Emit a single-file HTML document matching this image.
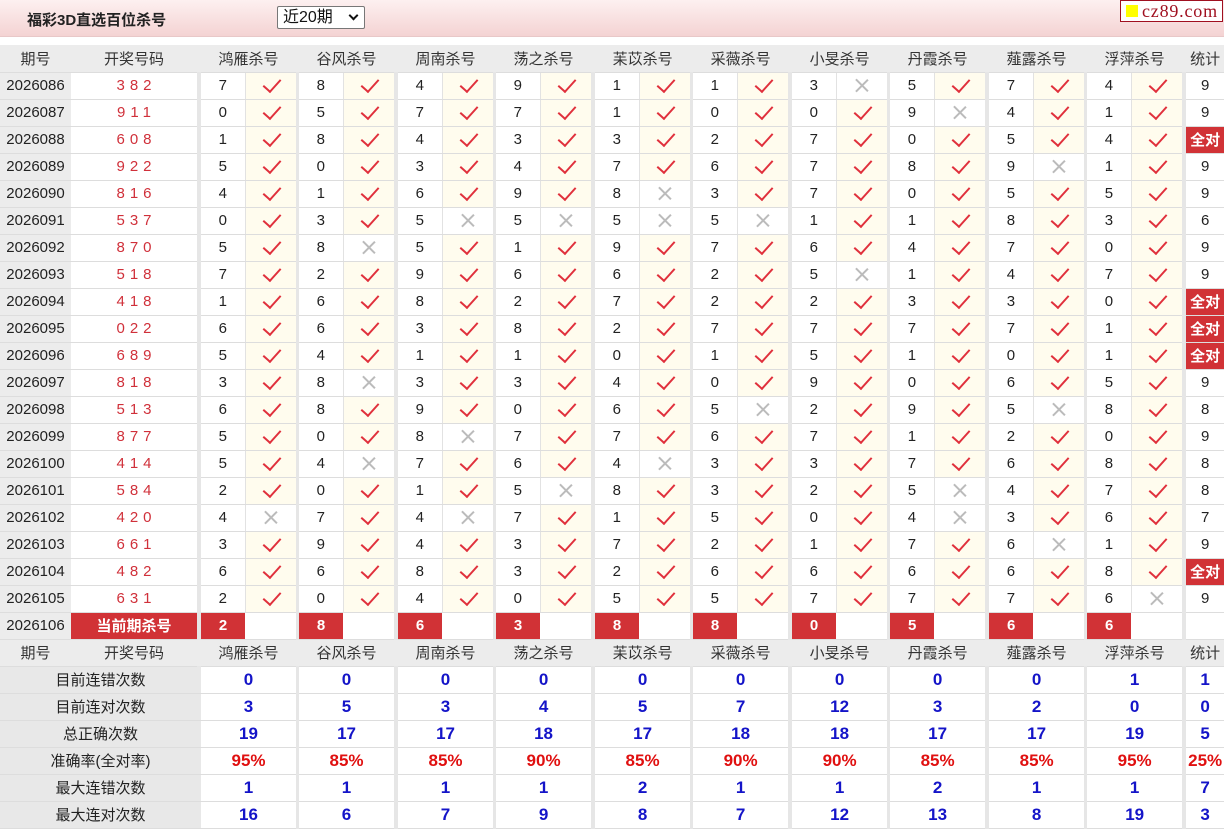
<!DOCTYPE html>
<html><head><meta charset="utf-8">
<style>
*{margin:0;padding:0;box-sizing:border-box}
body{width:1224px;height:828px;background:#fff;font-family:"Liberation Sans","Noto Sans CJK SC",sans-serif;overflow:hidden;position:relative}
.top{position:absolute;left:0;top:0;width:1224px;height:37px;background:linear-gradient(#fdf0f0,#f4d3d3);border-bottom:1px solid #e8c8c8}
.title{position:absolute;left:27px;top:9px;font-size:15px;font-weight:bold;color:#222}
.sel{position:absolute;left:277px;top:6px;width:88px;height:23px;border:1px solid #777;background:#fff;border-radius:2px;font-size:16px;padding-left:5px;line-height:21px;color:#111}
.sel i{position:absolute;right:7px;top:5px;width:7px;height:7px;border-right:2px solid #111;border-bottom:2px solid #111;transform:rotate(45deg)}
.logo{position:absolute;left:1120px;top:0;width:103px;height:22px;border:1px solid #a01020;background:#fff;font-family:"Liberation Serif",serif;font-size:18px;color:#a01020;line-height:20px;padding-left:21px;letter-spacing:.8px}
.logo b{position:absolute;left:5px;top:4px;width:12px;height:12px;background:#ffff00}
table{position:absolute;left:0;top:45px;border-collapse:collapse;table-layout:fixed;width:1224px}
td{height:27px;border-bottom:1px solid #ddd;text-align:center;font-size:15px;color:#222;padding:0;white-space:nowrap;overflow:hidden}
tr.h td{background:#ececec;color:#333}
td.q{background:#ececec}
td.k{color:#d0303a;letter-spacing:5px;padding-left:5px}
td.s{background:#e6e6e6;border-bottom-color:#e6e6e6}
td.n{border-right:1px solid #e2e2e2}
td.y{background:#fffcee;position:relative}
td.y::after{content:"";position:absolute;left:21px;top:2px;width:8px;height:15px;border-right:2.5px solid #e0303c;border-bottom:2.5px solid #e0303c;transform:rotate(42deg)}
td.x{position:relative}
td.x::before,td.x::after{content:"";position:absolute;left:24px;top:4px;width:1.5px;height:17px;background:#bbb;transform:rotate(45deg)}
td.x::after{transform:rotate(-45deg)}
td.r{background:#d13236;color:#fff;font-weight:bold}
td.L{background:#e8e8e8;color:#222}
td.v{color:#1414c8;font-weight:bold;font-size:17px}
td.p{color:#e01010;font-weight:bold;font-size:17px}
</style></head><body>
<div class="top"><div class="title">福彩3D直选百位杀号</div><div class="sel">近20期<i></i></div><div class="logo"><b></b>cz89.com</div></div>
<table>
<colgroup><col style="width:71px"><col style="width:126px"><col style="width:4px">
<col style="width:44px"><col style="width:51px"><col style="width:3px">
<col style="width:44px"><col style="width:51px"><col style="width:4px">
<col style="width:44px"><col style="width:51px"><col style="width:3px">
<col style="width:44px"><col style="width:51px"><col style="width:4px">
<col style="width:44px"><col style="width:51px"><col style="width:3px">
<col style="width:44px"><col style="width:51px"><col style="width:4px">
<col style="width:44px"><col style="width:51px"><col style="width:3px">
<col style="width:44px"><col style="width:51px"><col style="width:4px">
<col style="width:44px"><col style="width:51px"><col style="width:3px">
<col style="width:44px"><col style="width:51px"><col style="width:4px">
<col style="width:38px"></colgroup>
<tr class="h"><td>期号</td><td>开奖号码</td><td class="s"></td><td colspan="2">鸿雁杀号</td><td class="s"></td><td colspan="2">谷风杀号</td><td class="s"></td><td colspan="2">周南杀号</td><td class="s"></td><td colspan="2">荡之杀号</td><td class="s"></td><td colspan="2">苿苡杀号</td><td class="s"></td><td colspan="2">采薇杀号</td><td class="s"></td><td colspan="2">小旻杀号</td><td class="s"></td><td colspan="2">丹霞杀号</td><td class="s"></td><td colspan="2">薤露杀号</td><td class="s"></td><td colspan="2">浮萍杀号</td><td class="s"></td><td>统计</td></tr>
<tr><td class="q">2026086</td><td class="k">382</td><td class="s"></td><td class="n">7</td><td class="y"></td><td class="s"></td><td class="n">8</td><td class="y"></td><td class="s"></td><td class="n">4</td><td class="y"></td><td class="s"></td><td class="n">9</td><td class="y"></td><td class="s"></td><td class="n">1</td><td class="y"></td><td class="s"></td><td class="n">1</td><td class="y"></td><td class="s"></td><td class="n">3</td><td class="x"></td><td class="s"></td><td class="n">5</td><td class="y"></td><td class="s"></td><td class="n">7</td><td class="y"></td><td class="s"></td><td class="n">4</td><td class="y"></td><td class="s"></td><td>9</td></tr>
<tr><td class="q">2026087</td><td class="k">911</td><td class="s"></td><td class="n">0</td><td class="y"></td><td class="s"></td><td class="n">5</td><td class="y"></td><td class="s"></td><td class="n">7</td><td class="y"></td><td class="s"></td><td class="n">7</td><td class="y"></td><td class="s"></td><td class="n">1</td><td class="y"></td><td class="s"></td><td class="n">0</td><td class="y"></td><td class="s"></td><td class="n">0</td><td class="y"></td><td class="s"></td><td class="n">9</td><td class="x"></td><td class="s"></td><td class="n">4</td><td class="y"></td><td class="s"></td><td class="n">1</td><td class="y"></td><td class="s"></td><td>9</td></tr>
<tr><td class="q">2026088</td><td class="k">608</td><td class="s"></td><td class="n">1</td><td class="y"></td><td class="s"></td><td class="n">8</td><td class="y"></td><td class="s"></td><td class="n">4</td><td class="y"></td><td class="s"></td><td class="n">3</td><td class="y"></td><td class="s"></td><td class="n">3</td><td class="y"></td><td class="s"></td><td class="n">2</td><td class="y"></td><td class="s"></td><td class="n">7</td><td class="y"></td><td class="s"></td><td class="n">0</td><td class="y"></td><td class="s"></td><td class="n">5</td><td class="y"></td><td class="s"></td><td class="n">4</td><td class="y"></td><td class="s"></td><td class="r">全对</td></tr>
<tr><td class="q">2026089</td><td class="k">922</td><td class="s"></td><td class="n">5</td><td class="y"></td><td class="s"></td><td class="n">0</td><td class="y"></td><td class="s"></td><td class="n">3</td><td class="y"></td><td class="s"></td><td class="n">4</td><td class="y"></td><td class="s"></td><td class="n">7</td><td class="y"></td><td class="s"></td><td class="n">6</td><td class="y"></td><td class="s"></td><td class="n">7</td><td class="y"></td><td class="s"></td><td class="n">8</td><td class="y"></td><td class="s"></td><td class="n">9</td><td class="x"></td><td class="s"></td><td class="n">1</td><td class="y"></td><td class="s"></td><td>9</td></tr>
<tr><td class="q">2026090</td><td class="k">816</td><td class="s"></td><td class="n">4</td><td class="y"></td><td class="s"></td><td class="n">1</td><td class="y"></td><td class="s"></td><td class="n">6</td><td class="y"></td><td class="s"></td><td class="n">9</td><td class="y"></td><td class="s"></td><td class="n">8</td><td class="x"></td><td class="s"></td><td class="n">3</td><td class="y"></td><td class="s"></td><td class="n">7</td><td class="y"></td><td class="s"></td><td class="n">0</td><td class="y"></td><td class="s"></td><td class="n">5</td><td class="y"></td><td class="s"></td><td class="n">5</td><td class="y"></td><td class="s"></td><td>9</td></tr>
<tr><td class="q">2026091</td><td class="k">537</td><td class="s"></td><td class="n">0</td><td class="y"></td><td class="s"></td><td class="n">3</td><td class="y"></td><td class="s"></td><td class="n">5</td><td class="x"></td><td class="s"></td><td class="n">5</td><td class="x"></td><td class="s"></td><td class="n">5</td><td class="x"></td><td class="s"></td><td class="n">5</td><td class="x"></td><td class="s"></td><td class="n">1</td><td class="y"></td><td class="s"></td><td class="n">1</td><td class="y"></td><td class="s"></td><td class="n">8</td><td class="y"></td><td class="s"></td><td class="n">3</td><td class="y"></td><td class="s"></td><td>6</td></tr>
<tr><td class="q">2026092</td><td class="k">870</td><td class="s"></td><td class="n">5</td><td class="y"></td><td class="s"></td><td class="n">8</td><td class="x"></td><td class="s"></td><td class="n">5</td><td class="y"></td><td class="s"></td><td class="n">1</td><td class="y"></td><td class="s"></td><td class="n">9</td><td class="y"></td><td class="s"></td><td class="n">7</td><td class="y"></td><td class="s"></td><td class="n">6</td><td class="y"></td><td class="s"></td><td class="n">4</td><td class="y"></td><td class="s"></td><td class="n">7</td><td class="y"></td><td class="s"></td><td class="n">0</td><td class="y"></td><td class="s"></td><td>9</td></tr>
<tr><td class="q">2026093</td><td class="k">518</td><td class="s"></td><td class="n">7</td><td class="y"></td><td class="s"></td><td class="n">2</td><td class="y"></td><td class="s"></td><td class="n">9</td><td class="y"></td><td class="s"></td><td class="n">6</td><td class="y"></td><td class="s"></td><td class="n">6</td><td class="y"></td><td class="s"></td><td class="n">2</td><td class="y"></td><td class="s"></td><td class="n">5</td><td class="x"></td><td class="s"></td><td class="n">1</td><td class="y"></td><td class="s"></td><td class="n">4</td><td class="y"></td><td class="s"></td><td class="n">7</td><td class="y"></td><td class="s"></td><td>9</td></tr>
<tr><td class="q">2026094</td><td class="k">418</td><td class="s"></td><td class="n">1</td><td class="y"></td><td class="s"></td><td class="n">6</td><td class="y"></td><td class="s"></td><td class="n">8</td><td class="y"></td><td class="s"></td><td class="n">2</td><td class="y"></td><td class="s"></td><td class="n">7</td><td class="y"></td><td class="s"></td><td class="n">2</td><td class="y"></td><td class="s"></td><td class="n">2</td><td class="y"></td><td class="s"></td><td class="n">3</td><td class="y"></td><td class="s"></td><td class="n">3</td><td class="y"></td><td class="s"></td><td class="n">0</td><td class="y"></td><td class="s"></td><td class="r">全对</td></tr>
<tr><td class="q">2026095</td><td class="k">022</td><td class="s"></td><td class="n">6</td><td class="y"></td><td class="s"></td><td class="n">6</td><td class="y"></td><td class="s"></td><td class="n">3</td><td class="y"></td><td class="s"></td><td class="n">8</td><td class="y"></td><td class="s"></td><td class="n">2</td><td class="y"></td><td class="s"></td><td class="n">7</td><td class="y"></td><td class="s"></td><td class="n">7</td><td class="y"></td><td class="s"></td><td class="n">7</td><td class="y"></td><td class="s"></td><td class="n">7</td><td class="y"></td><td class="s"></td><td class="n">1</td><td class="y"></td><td class="s"></td><td class="r">全对</td></tr>
<tr><td class="q">2026096</td><td class="k">689</td><td class="s"></td><td class="n">5</td><td class="y"></td><td class="s"></td><td class="n">4</td><td class="y"></td><td class="s"></td><td class="n">1</td><td class="y"></td><td class="s"></td><td class="n">1</td><td class="y"></td><td class="s"></td><td class="n">0</td><td class="y"></td><td class="s"></td><td class="n">1</td><td class="y"></td><td class="s"></td><td class="n">5</td><td class="y"></td><td class="s"></td><td class="n">1</td><td class="y"></td><td class="s"></td><td class="n">0</td><td class="y"></td><td class="s"></td><td class="n">1</td><td class="y"></td><td class="s"></td><td class="r">全对</td></tr>
<tr><td class="q">2026097</td><td class="k">818</td><td class="s"></td><td class="n">3</td><td class="y"></td><td class="s"></td><td class="n">8</td><td class="x"></td><td class="s"></td><td class="n">3</td><td class="y"></td><td class="s"></td><td class="n">3</td><td class="y"></td><td class="s"></td><td class="n">4</td><td class="y"></td><td class="s"></td><td class="n">0</td><td class="y"></td><td class="s"></td><td class="n">9</td><td class="y"></td><td class="s"></td><td class="n">0</td><td class="y"></td><td class="s"></td><td class="n">6</td><td class="y"></td><td class="s"></td><td class="n">5</td><td class="y"></td><td class="s"></td><td>9</td></tr>
<tr><td class="q">2026098</td><td class="k">513</td><td class="s"></td><td class="n">6</td><td class="y"></td><td class="s"></td><td class="n">8</td><td class="y"></td><td class="s"></td><td class="n">9</td><td class="y"></td><td class="s"></td><td class="n">0</td><td class="y"></td><td class="s"></td><td class="n">6</td><td class="y"></td><td class="s"></td><td class="n">5</td><td class="x"></td><td class="s"></td><td class="n">2</td><td class="y"></td><td class="s"></td><td class="n">9</td><td class="y"></td><td class="s"></td><td class="n">5</td><td class="x"></td><td class="s"></td><td class="n">8</td><td class="y"></td><td class="s"></td><td>8</td></tr>
<tr><td class="q">2026099</td><td class="k">877</td><td class="s"></td><td class="n">5</td><td class="y"></td><td class="s"></td><td class="n">0</td><td class="y"></td><td class="s"></td><td class="n">8</td><td class="x"></td><td class="s"></td><td class="n">7</td><td class="y"></td><td class="s"></td><td class="n">7</td><td class="y"></td><td class="s"></td><td class="n">6</td><td class="y"></td><td class="s"></td><td class="n">7</td><td class="y"></td><td class="s"></td><td class="n">1</td><td class="y"></td><td class="s"></td><td class="n">2</td><td class="y"></td><td class="s"></td><td class="n">0</td><td class="y"></td><td class="s"></td><td>9</td></tr>
<tr><td class="q">2026100</td><td class="k">414</td><td class="s"></td><td class="n">5</td><td class="y"></td><td class="s"></td><td class="n">4</td><td class="x"></td><td class="s"></td><td class="n">7</td><td class="y"></td><td class="s"></td><td class="n">6</td><td class="y"></td><td class="s"></td><td class="n">4</td><td class="x"></td><td class="s"></td><td class="n">3</td><td class="y"></td><td class="s"></td><td class="n">3</td><td class="y"></td><td class="s"></td><td class="n">7</td><td class="y"></td><td class="s"></td><td class="n">6</td><td class="y"></td><td class="s"></td><td class="n">8</td><td class="y"></td><td class="s"></td><td>8</td></tr>
<tr><td class="q">2026101</td><td class="k">584</td><td class="s"></td><td class="n">2</td><td class="y"></td><td class="s"></td><td class="n">0</td><td class="y"></td><td class="s"></td><td class="n">1</td><td class="y"></td><td class="s"></td><td class="n">5</td><td class="x"></td><td class="s"></td><td class="n">8</td><td class="y"></td><td class="s"></td><td class="n">3</td><td class="y"></td><td class="s"></td><td class="n">2</td><td class="y"></td><td class="s"></td><td class="n">5</td><td class="x"></td><td class="s"></td><td class="n">4</td><td class="y"></td><td class="s"></td><td class="n">7</td><td class="y"></td><td class="s"></td><td>8</td></tr>
<tr><td class="q">2026102</td><td class="k">420</td><td class="s"></td><td class="n">4</td><td class="x"></td><td class="s"></td><td class="n">7</td><td class="y"></td><td class="s"></td><td class="n">4</td><td class="x"></td><td class="s"></td><td class="n">7</td><td class="y"></td><td class="s"></td><td class="n">1</td><td class="y"></td><td class="s"></td><td class="n">5</td><td class="y"></td><td class="s"></td><td class="n">0</td><td class="y"></td><td class="s"></td><td class="n">4</td><td class="x"></td><td class="s"></td><td class="n">3</td><td class="y"></td><td class="s"></td><td class="n">6</td><td class="y"></td><td class="s"></td><td>7</td></tr>
<tr><td class="q">2026103</td><td class="k">661</td><td class="s"></td><td class="n">3</td><td class="y"></td><td class="s"></td><td class="n">9</td><td class="y"></td><td class="s"></td><td class="n">4</td><td class="y"></td><td class="s"></td><td class="n">3</td><td class="y"></td><td class="s"></td><td class="n">7</td><td class="y"></td><td class="s"></td><td class="n">2</td><td class="y"></td><td class="s"></td><td class="n">1</td><td class="y"></td><td class="s"></td><td class="n">7</td><td class="y"></td><td class="s"></td><td class="n">6</td><td class="x"></td><td class="s"></td><td class="n">1</td><td class="y"></td><td class="s"></td><td>9</td></tr>
<tr><td class="q">2026104</td><td class="k">482</td><td class="s"></td><td class="n">6</td><td class="y"></td><td class="s"></td><td class="n">6</td><td class="y"></td><td class="s"></td><td class="n">8</td><td class="y"></td><td class="s"></td><td class="n">3</td><td class="y"></td><td class="s"></td><td class="n">2</td><td class="y"></td><td class="s"></td><td class="n">6</td><td class="y"></td><td class="s"></td><td class="n">6</td><td class="y"></td><td class="s"></td><td class="n">6</td><td class="y"></td><td class="s"></td><td class="n">6</td><td class="y"></td><td class="s"></td><td class="n">8</td><td class="y"></td><td class="s"></td><td class="r">全对</td></tr>
<tr><td class="q">2026105</td><td class="k">631</td><td class="s"></td><td class="n">2</td><td class="y"></td><td class="s"></td><td class="n">0</td><td class="y"></td><td class="s"></td><td class="n">4</td><td class="y"></td><td class="s"></td><td class="n">0</td><td class="y"></td><td class="s"></td><td class="n">5</td><td class="y"></td><td class="s"></td><td class="n">5</td><td class="y"></td><td class="s"></td><td class="n">7</td><td class="y"></td><td class="s"></td><td class="n">7</td><td class="y"></td><td class="s"></td><td class="n">7</td><td class="y"></td><td class="s"></td><td class="n">6</td><td class="x"></td><td class="s"></td><td>9</td></tr>
<tr><td class="q">2026106</td><td class="r">当前期杀号</td><td class="s"></td><td class="r">2</td><td></td><td class="s"></td><td class="r">8</td><td></td><td class="s"></td><td class="r">6</td><td></td><td class="s"></td><td class="r">3</td><td></td><td class="s"></td><td class="r">8</td><td></td><td class="s"></td><td class="r">8</td><td></td><td class="s"></td><td class="r">0</td><td></td><td class="s"></td><td class="r">5</td><td></td><td class="s"></td><td class="r">6</td><td></td><td class="s"></td><td class="r">6</td><td></td><td class="s"></td><td></td></tr>
<tr class="h"><td>期号</td><td>开奖号码</td><td class="s"></td><td colspan="2">鸿雁杀号</td><td class="s"></td><td colspan="2">谷风杀号</td><td class="s"></td><td colspan="2">周南杀号</td><td class="s"></td><td colspan="2">荡之杀号</td><td class="s"></td><td colspan="2">苿苡杀号</td><td class="s"></td><td colspan="2">采薇杀号</td><td class="s"></td><td colspan="2">小旻杀号</td><td class="s"></td><td colspan="2">丹霞杀号</td><td class="s"></td><td colspan="2">薤露杀号</td><td class="s"></td><td colspan="2">浮萍杀号</td><td class="s"></td><td>统计</td></tr>
<tr><td class="L" colspan="3">目前连错次数</td><td class="v" colspan="2">0</td><td class="s"></td><td class="v" colspan="2">0</td><td class="s"></td><td class="v" colspan="2">0</td><td class="s"></td><td class="v" colspan="2">0</td><td class="s"></td><td class="v" colspan="2">0</td><td class="s"></td><td class="v" colspan="2">0</td><td class="s"></td><td class="v" colspan="2">0</td><td class="s"></td><td class="v" colspan="2">0</td><td class="s"></td><td class="v" colspan="2">0</td><td class="s"></td><td class="v" colspan="2">1</td><td class="s"></td><td class="v">1</td></tr>
<tr><td class="L" colspan="3">目前连对次数</td><td class="v" colspan="2">3</td><td class="s"></td><td class="v" colspan="2">5</td><td class="s"></td><td class="v" colspan="2">3</td><td class="s"></td><td class="v" colspan="2">4</td><td class="s"></td><td class="v" colspan="2">5</td><td class="s"></td><td class="v" colspan="2">7</td><td class="s"></td><td class="v" colspan="2">12</td><td class="s"></td><td class="v" colspan="2">3</td><td class="s"></td><td class="v" colspan="2">2</td><td class="s"></td><td class="v" colspan="2">0</td><td class="s"></td><td class="v">0</td></tr>
<tr><td class="L" colspan="3">总正确次数</td><td class="v" colspan="2">19</td><td class="s"></td><td class="v" colspan="2">17</td><td class="s"></td><td class="v" colspan="2">17</td><td class="s"></td><td class="v" colspan="2">18</td><td class="s"></td><td class="v" colspan="2">17</td><td class="s"></td><td class="v" colspan="2">18</td><td class="s"></td><td class="v" colspan="2">18</td><td class="s"></td><td class="v" colspan="2">17</td><td class="s"></td><td class="v" colspan="2">17</td><td class="s"></td><td class="v" colspan="2">19</td><td class="s"></td><td class="v">5</td></tr>
<tr><td class="L" colspan="3">准确率(全对率)</td><td class="p" colspan="2">95%</td><td class="s"></td><td class="p" colspan="2">85%</td><td class="s"></td><td class="p" colspan="2">85%</td><td class="s"></td><td class="p" colspan="2">90%</td><td class="s"></td><td class="p" colspan="2">85%</td><td class="s"></td><td class="p" colspan="2">90%</td><td class="s"></td><td class="p" colspan="2">90%</td><td class="s"></td><td class="p" colspan="2">85%</td><td class="s"></td><td class="p" colspan="2">85%</td><td class="s"></td><td class="p" colspan="2">95%</td><td class="s"></td><td class="p">25%</td></tr>
<tr><td class="L" colspan="3">最大连错次数</td><td class="v" colspan="2">1</td><td class="s"></td><td class="v" colspan="2">1</td><td class="s"></td><td class="v" colspan="2">1</td><td class="s"></td><td class="v" colspan="2">1</td><td class="s"></td><td class="v" colspan="2">2</td><td class="s"></td><td class="v" colspan="2">1</td><td class="s"></td><td class="v" colspan="2">1</td><td class="s"></td><td class="v" colspan="2">2</td><td class="s"></td><td class="v" colspan="2">1</td><td class="s"></td><td class="v" colspan="2">1</td><td class="s"></td><td class="v">7</td></tr>
<tr><td class="L" colspan="3">最大连对次数</td><td class="v" colspan="2">16</td><td class="s"></td><td class="v" colspan="2">6</td><td class="s"></td><td class="v" colspan="2">7</td><td class="s"></td><td class="v" colspan="2">9</td><td class="s"></td><td class="v" colspan="2">8</td><td class="s"></td><td class="v" colspan="2">7</td><td class="s"></td><td class="v" colspan="2">12</td><td class="s"></td><td class="v" colspan="2">13</td><td class="s"></td><td class="v" colspan="2">8</td><td class="s"></td><td class="v" colspan="2">19</td><td class="s"></td><td class="v">3</td></tr>
</table>
</body></html>
